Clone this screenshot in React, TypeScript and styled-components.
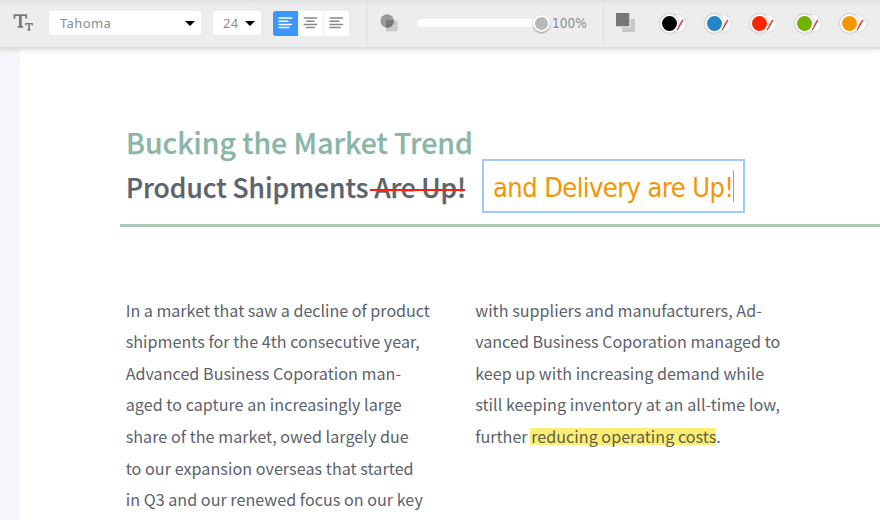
import React from 'react';
import styled, { createGlobalStyle } from 'styled-components';

const GlobalStyle = createGlobalStyle`
  *, *::before, *::after { box-sizing: border-box; }
  body { margin: 0; overflow: hidden; background: #f4f6fb; }
`;

const Editor = styled.div`
  display: flex;
  flex-direction: column;
  width: 880px;
  height: 520px;
  overflow: hidden;
  font-family: 'Noto Sans CJK SC', 'Noto Sans', sans-serif;
  color: #5c636c;
`;

const Toolbar = styled.header`
  display: flex;
  flex: none;
  height: 49px;
  background: linear-gradient(#e1e1e1, #ededed 5px, #ededed);
  border-bottom: 2px solid #dfdfdf;
  box-shadow: 0 1px 5px rgba(0, 0, 0, 0.13);
  z-index: 1;
`;

const Group = styled.div<{ $width?: number; $pad: number }>`
  display: flex;
  flex: ${(p) => (p.$width ? 'none' : '1')};
  align-items: center;
  width: ${(p) => (p.$width ? `${p.$width}px` : 'auto')};
  padding: 0 0 1px ${(p) => p.$pad}px;

  & + & { border-left: 1px solid #dedede; }
`;

const FontIcon = styled.svg`
  flex: none;
  width: 20px;
  height: 20px;
  margin-right: 16px;
`;

const Select = styled.button<{ $width: number; $pad: number }>`
  display: flex;
  flex: none;
  align-items: center;
  justify-content: space-between;
  width: ${(p) => p.$width}px;
  height: 24px;
  margin-right: 12px;
  padding: 0 6px 0 ${(p) => p.$pad}px;
  border: 0;
  border-radius: 2px;
  background: #fff;
  color: #898c91;
  font: 13px/24px 'Noto Sans', sans-serif;
  letter-spacing: 0.4px;
`;

const Caret = styled.span`
  border: 5px solid transparent;
  border-top: 5px solid #000;
  border-bottom: 0;
`;

const Segments = styled.div`
  display: flex;
  gap: 1px;
  height: 25px;
  border-radius: 3px;
  overflow: hidden;
`;

const Segment = styled.button<{ $active?: boolean }>`
  display: flex;
  align-items: center;
  justify-content: center;
  width: 24.6px;
  padding: 0;
  border: 0;
  background: ${(p) => (p.$active ? '#3b97fd' : '#fff')};
  color: ${(p) => (p.$active ? '#fff' : '#86888b')};
`;

const Glyph = styled.svg<{ $w: number; $h: number }>`
  flex: none;
  width: ${(p) => p.$w}px;
  height: ${(p) => p.$h}px;
`;

const Slider = styled.div`
  display: flex;
  align-items: center;
  justify-content: flex-end;
  width: 132.5px;
  height: 8px;
  margin-left: 19px;
  border-radius: 4px;
  background: #fff;
`;

const Thumb = styled.span`
  flex: none;
  width: 17px;
  height: 17px;
  border: 2.5px solid #fff;
  border-radius: 50%;
  background: #b7b8ba;
  box-shadow: 0 1px 2px rgba(0, 0, 0, 0.4);
`;

const Percent = styled.span`
  margin-left: 2.5px;
  color: #898c91;
  font: 13.5px/24px 'DejaVu Sans Condensed', 'DejaVu Sans', sans-serif;
`;

const Swatches = styled.div`
  display: flex;
  gap: 18px;
  margin-left: 25px;
`;

const Swatch = styled.button`
  display: flex;
  align-items: center;
  width: 27px;
  padding: 0;
  border: 0;
  background: none;
`;

const Fill = styled.span<{ $color: string }>`
  flex: none;
  width: 19px;
  height: 19px;
  margin-left: -1px;
  border: 2px solid #fff;
  border-radius: 50%;
  background: ${(p) => p.$color};
  box-shadow: 0 0 2px rgba(0, 0, 0, 0.4);
  z-index: 1;
`;

const NoStroke = styled.svg`
  flex: none;
  width: 17px;
  height: 17px;
  margin-left: -10px;
  border-radius: 50%;
  background: #fff;
  box-shadow: 0 0 1.5px rgba(0, 0, 0, 0.25);
`;

const Page = styled.main`
  flex: 1;
  margin-left: 20px;
  background: #fff;
`;

const Headline = styled.div`
  height: 178px;
  margin-left: 100px;
  padding: 75px 0 0 6px;
  border-bottom: 3px solid #abc7b8;
`;

const Title = styled.h1`
  margin: 0;
  color: #8ab5a7;
  font-size: 28.4px;
  font-weight: 500;
  line-height: 36px;
  -webkit-text-stroke: 0.25px currentColor;
`;

const SubtitleRow = styled.div`
  display: flex;
  align-items: flex-start;
  margin-top: -1px;
`;

const Subtitle = styled.h2`
  width: 341px;
  margin: 11px 0 0;
  font-size: 26.4px;
  font-weight: 500;
  line-height: 34px;
  white-space: pre;
  -webkit-text-stroke: 0.25px currentColor;
`;

const Removed = styled.del`
  position: relative;
  text-decoration: none;
  letter-spacing: -0.15px;

  &::after {
    content: '';
    position: absolute;
    left: 2px;
    right: 1px;
    top: 22px;
    height: 2px;
    background: #fb1f0d;
  }
`;

const TextBox = styled.div`
  display: flex;
  align-items: center;
  width: 263px;
  height: 54px;
  margin-left: 15px;
  padding: 4px 0 0 9px;
  border: 2px solid #a0caff;
  color: #f69500;
  font: 27px/32px 'DejaVu Sans Condensed', 'DejaVu Sans', sans-serif;
  letter-spacing: -0.57px;
  white-space: nowrap;
`;

const Cursor = styled.span`
  flex: none;
  width: 1px;
  height: 32px;
  margin-top: -4px;
  background: #f69500;
`;

const Columns = styled.div`
  display: grid;
  grid-template-columns: 349.5px 1fr;
  padding: 67.7px 0 0 105.7px;
`;

const Paragraph = styled.p`
  margin: 0;
  font-size: 16.12px;
  line-height: 31.6px;
  white-space: nowrap;
`;

const Line = styled.span<{ $track?: number }>`
  display: block;
  letter-spacing: ${(p) => p.$track ?? 0}px;
`;

const Highlight = styled.mark`
  margin-left: -1px;
  padding-left: 1px;
  background: linear-gradient(#fdee76, #fdee76) 0 4px / 100% 17px no-repeat;
  color: #5f6048;
`;

const AlignIcon = ({ center }: { center?: boolean }) => (
  <Glyph $w={15} $h={12} viewBox="0 0 15 12" stroke="currentColor" strokeWidth="1.5" strokeLinecap="round">
    {center ? (
      <path d="M1.2 1H13.5M3.7 4.2H11M1.2 7.4H13.5M3.5 10.6H11.2" />
    ) : (
      <path d="M1 1H13.5M1 4.2H10M1 7.4H13.5M1 10.6H11" />
    )}
  </Glyph>
);

const left: [string, number][] = [
  ['In a market that saw a decline of product', -0.02],
  ['shipments for the 4th consecutive year,', 0.03],
  ['Advanced Business Coporation man-', 0.03],
  ['aged to capture an increasingly large', 0.04],
  ['share of the market, owed largely due', 0.04],
  ['to our expansion overseas that started', 0.05],
  ['in Q3 and our renewed focus on our key', 0.03],
];

const right: [string, number][] = [
  ['with suppliers and manufacturers, Ad-', 0.03],
  ['vanced Business Coporation managed to', 0],
  ['keep up with increasing demand while', 0.03],
  ['still keeping inventory at an all-time low,', 0.05],
];

const colors = ['#000000', '#2484c8', '#fb2600', '#6db300', '#f59600'];

export default function App() {
  return (
    <Editor>
      <GlobalStyle />
      <Toolbar>
        <Group $width={366} $pad={13}>
          <FontIcon viewBox="0 0 20 20" fill="none" stroke="#77797b">
            <path d="M1.5 5.5V2.2H13.2V5.5M4.6 13.8H10.1" strokeWidth="1.8" />
            <path d="M7.35 2V14" strokeWidth="2.8" />
            <path d="M12.8 12.4V10.7H19.2V12.4M14.3 16.9H17.7" strokeWidth="1.3" />
            <path d="M16 10.3V17.4" strokeWidth="1.7" />
          </FontIcon>
          <Select $width={152} $pad={11}>Tahoma<Caret /></Select>
          <Select $width={48} $pad={10}>24<Caret /></Select>
          <Segments>
            <Segment $active><AlignIcon /></Segment>
            <Segment><AlignIcon center /></Segment>
            <Segment><AlignIcon /></Segment>
          </Segments>
        </Group>
        <Group $width={237} $pad={13}>
          <Glyph $w={18} $h={18} viewBox="0 0 18 18">
            <path d="M6 6.3H17.5V17.3H6Z" fill="#c9c9c9" />
            <circle cx="7.2" cy="7" r="6.7" fill="#999" />
            <path d="M6 6.3H13.8A6.7 6.7 0 0 1 6 13.6Z" fill="#777" />
          </Glyph>
          <Slider><Thumb /></Slider>
          <Percent>100%</Percent>
        </Group>
        <Group $pad={12}>
          <Glyph $w={20} $h={20} viewBox="0 0 20 20">
            <path d="M6 6H19V19H6Z" fill="#c8c8c8" />
            <path d="M0 0H14.5V14.5H0Z" fill="#ededed" />
            <path d="M0 0H13.3V13.3H0Z" fill="#777" />
          </Glyph>
          <Swatches>
            {colors.map((c) => (
              <Swatch key={c}>
                <Fill $color={c} />
                <NoStroke viewBox="0 0 17 17">
                  <path d="M8 15.2L13.8 4.8" stroke="#e8342c" strokeWidth="1.4" />
                </NoStroke>
              </Swatch>
            ))}
          </Swatches>
        </Group>
      </Toolbar>
      <Page>
        <Headline>
          <Title>Bucking the Market Trend</Title>
          <SubtitleRow>
            <Subtitle>Product Shipments<Removed> Are Up!</Removed></Subtitle>
            <TextBox>and Delivery are Up!<Cursor /></TextBox>
          </SubtitleRow>
        </Headline>
        <Columns>
          <Paragraph>{left.map(([t, k]) => <Line key={t} $track={k}>{t}</Line>)}</Paragraph>
          <Paragraph>
            {right.map(([t, k]) => <Line key={t} $track={k}>{t}</Line>)}
            <Line $track={0.02}>further <Highlight>reducing operating costs</Highlight>.</Line>
          </Paragraph>
        </Columns>
      </Page>
    </Editor>
  );
}
